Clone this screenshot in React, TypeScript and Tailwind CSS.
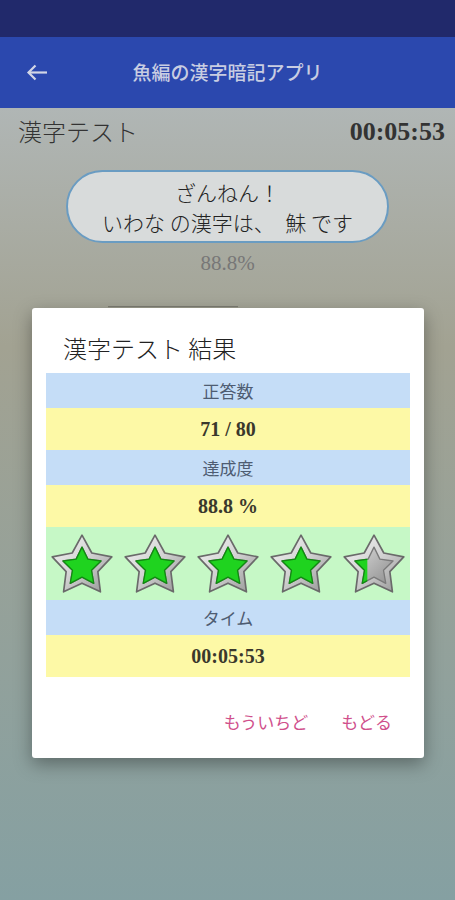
const SERIF = "font-['Liberation_Serif','Noto_Sans_CJK_JP',serif]";
const SANS = "font-['Noto_Sans_CJK_JP','Liberation_Sans',sans-serif]";

const OUTER = "50,5 64.7,31.78 94.7,37.48 73.78,59.73 77.63,90.02 50,77 22.37,90.02 26.22,59.73 5.3,37.48 35.3,31.78";
const INNER = "50,23 58.82,40.87 78.53,43.73 64.27,57.64 67.63,77.27 50,68 32.37,77.27 35.73,57.64 21.47,43.73 41.18,40.87";

const Star = ({ id, fill }: { id: string; fill: number }) => (
  <svg width="64" height="61" viewBox="2 2 96 91">
    <defs>
      <linearGradient id={`silver-${id}`} x1="0" y1="0" x2="1" y2="1">
        <stop offset="0" stopColor="#f6f6f6" />
        <stop offset="0.5" stopColor="#d2d2d2" />
        <stop offset="1" stopColor="#929292" />
      </linearGradient>
      <linearGradient id={`gray-${id}`} x1="0" y1="0" x2="1" y2="1">
        <stop offset="0" stopColor="#d8d8d8" />
        <stop offset="1" stopColor="#8e8e8e" />
      </linearGradient>
      <clipPath id={`clip-${id}`}>
        <rect x="0" y="0" width={fill * 100} height="100" />
      </clipPath>
    </defs>
    <polygon points={OUTER} fill={`url(#silver-${id})`} stroke="#6a6a6a" strokeWidth="2.5" strokeLinejoin="round" />
    <polygon points={INNER} fill={`url(#gray-${id})`} stroke="#7a7a7a" strokeWidth="2" strokeLinejoin="round" />
    <polygon
      points={INNER}
      fill="#1fd31f"
      stroke="#128a12"
      strokeWidth="2"
      strokeLinejoin="round"
      clipPath={`url(#clip-${id})`}
    />
  </svg>
);

const LabelRow = ({ label }: { label: string }) => (
  <div className={`h-[35px] bg-[#c5ddf7] flex items-center justify-center text-[17px] text-[#4e5c72] ${SANS}`}>
    {label}
  </div>
);

const ValueRow = ({ value }: { value: string }) => (
  <div className={`h-[42px] bg-[#fdf9a6] flex items-center justify-center text-[20px] font-bold text-[#3a382c] ${SERIF}`}>
    {value}
  </div>
);

export default function App() {
  const stars = [1, 1, 1, 1, 0.4];

  return (
    <div className="w-full h-[900px] flex flex-col overflow-hidden">
      <div className="h-[37px] bg-[#21296b]" />
      <div className="h-[71px] bg-[#2b48ae] grid grid-cols-[60px_1fr_60px] items-center">
        <div className="pl-[26px]">
          <svg width="22" height="17" viewBox="0 0 22 17" fill="none" stroke="#d2d6e6" strokeWidth="2.2">
            <path d="M21 8.5H2.5" />
            <path d="M9.5 1.5 2.5 8.5 9.5 15.5" />
          </svg>
        </div>
        <div className={`text-center text-[19px] font-medium text-[#c8cde2] ${SANS}`}>魚編の漢字暗記アプリ</div>
        <div />
      </div>

      <div className="relative flex-1 bg-linear-to-b from-[#b0b6b5] via-[#a2a292] via-30% to-[#85a0a2]">
        <div className="h-[46px] flex items-center justify-between pl-[18px] pr-[10px]">
          <span className={`text-[24px] text-[#333] ${SANS} font-light`}>漢字テスト</span>
          <span className={`text-[26px] font-bold text-[#333] ${SERIF}`}>00:05:53</span>
        </div>

        <div className="flex justify-center mt-[16px]">
          <div
            className={`w-[323px] h-[73px] rounded-full border-2 border-[#6a9cc2] bg-[#d8dbdb] flex flex-col items-center justify-center text-[21px] leading-[30px] text-[#222] ${SANS} font-light`}
          >
            <div>ざんねん！</div>
            <div>いわな の漢字は、　鮇 です</div>
          </div>
        </div>

        <div className={`text-center mt-[6px] text-[21px] leading-[28px] text-[#777] ${SERIF}`}>88.8%</div>

        <div className="ml-[108px] mt-[29px] w-[130px] h-[44px] bg-[#9c9c8e] border-t border-[#7d7d73]" />

        <div className="absolute inset-0 pt-[200px] pl-[32px] pr-[31px]">
          <div className="bg-white rounded-[3px] shadow-[0_6px_18px_rgba(0,0,0,0.35)] pt-[22px] pb-[18px]">
            <div className={`pl-[31px] text-[24px] leading-[36px] text-[#222] ${SANS} font-light`}>漢字テスト 結果</div>
            <div className="mx-[14px] mt-[7px] flex flex-col">
              <LabelRow label="正答数" />
              <ValueRow value="71 / 80" />
              <LabelRow label="達成度" />
              <ValueRow value="88.8 %" />
              <div className="h-[73px] bg-[#c6f8c6] grid grid-cols-5 items-center justify-items-center">
                {stars.map((f, i) => (
                  <Star key={i} id={`s${i}`} fill={f} />
                ))}
              </div>
              <LabelRow label="タイム" />
              <ValueRow value="00:05:53" />
            </div>
            <div className={`mt-[27px] h-[36px] flex items-center justify-end gap-[33px] pr-[32px] text-[17px] text-[#d0508c] ${SANS}`}>
              <button type="button">もういちど</button>
              <button type="button">もどる</button>
            </div>
          </div>
        </div>
      </div>
    </div>
  );
}
